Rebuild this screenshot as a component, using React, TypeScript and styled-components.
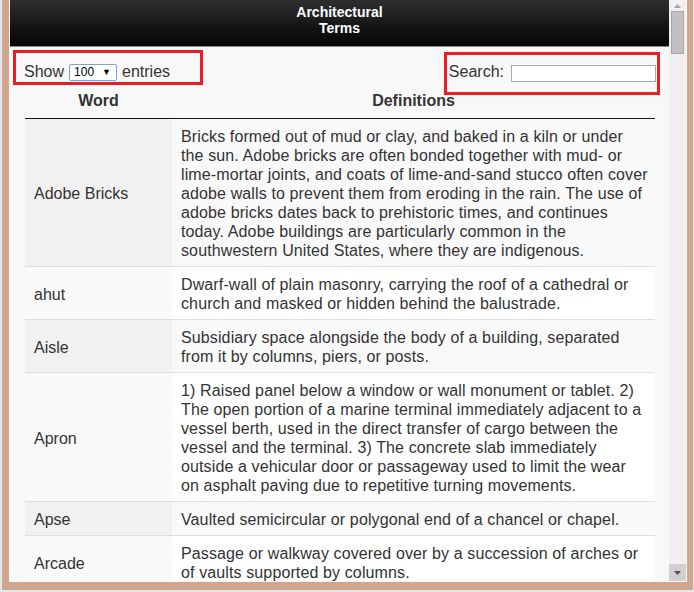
import styled, { createGlobalStyle } from 'styled-components'

const GlobalStyle = createGlobalStyle`
  html, body {
    margin: 0;
    padding: 0;
    background: #e4e7eb;
    overflow: hidden;
  }
  body {
    font-family: 'Liberation Sans', Arial, sans-serif;
    color: #333;
  }
`

type TTerm = {
  word: string
  lines: string[]
}

// lines are kept as the reference wraps them
const terms: TTerm[] = [
  {
    word: 'Adobe Bricks',
    lines: [
      'Bricks formed out of mud or clay, and baked in a kiln or under',
      'the sun. Adobe bricks are often bonded together with mud- or',
      'lime-mortar joints, and coats of lime-and-sand stucco often cover',
      'adobe walls to prevent them from eroding in the rain. The use of',
      'adobe bricks dates back to prehistoric times, and continues',
      'today. Adobe buildings are particularly common in the',
      'southwestern United States, where they are indigenous.',
    ],
  },
  {
    word: 'ahut',
    lines: [
      'Dwarf-wall of plain masonry, carrying the roof of a cathedral or',
      'church and masked or hidden behind the balustrade.',
    ],
  },
  {
    word: 'Aisle',
    lines: [
      'Subsidiary space alongside the body of a building, separated',
      'from it by columns, piers, or posts.',
    ],
  },
  {
    word: 'Apron',
    lines: [
      '1) Raised panel below a window or wall monument or tablet. 2)',
      'The open portion of a marine terminal immediately adjacent to a',
      'vessel berth, used in the direct transfer of cargo between the',
      'vessel and the terminal. 3) The concrete slab immediately',
      'outside a vehicular door or passageway used to limit the wear',
      'on asphalt paving due to repetitive turning movements.',
    ],
  },
  {
    word: 'Apse',
    lines: ['Vaulted semicircular or polygonal end of a chancel or chapel.'],
  },
  {
    word: 'Arcade',
    lines: [
      'Passage or walkway covered over by a succession of arches or',
      'of vaults supported by columns.',
    ],
  },
]

export default function App() {
  return (
    <>
      <GlobalStyle />
      <Page>
        <Frame>
          <Window>
            <Main>
              <Header>
                Architectural
                <br />
                Terms
              </Header>
              <Content>
                <Controls>
                  <LengthControl $box={{ top: -13, left: -11, width: 190, height: 35 }}>
                    Show
                    <FakeSelect>
                      <span>100</span>
                      <span className='arrow'>▼</span>
                    </FakeSelect>
                    entries
                  </LengthControl>
                  <FilterControl $box={{ top: -11, left: -5, width: 216, height: 43 }}>
                    Search:
                    <SearchInput type='search' aria-label='Search' />
                  </FilterControl>
                </Controls>
                <Table>
                  <colgroup>
                    <col style={{ width: 147 }} />
                    <col />
                  </colgroup>
                  <thead>
                    <tr>
                      <Th>Word</Th>
                      <Th>Definitions</Th>
                    </tr>
                  </thead>
                  <tbody>
                    {terms.map((t, i) => (
                      <Row key={t.word} $odd={i % 2 === 0}>
                        <WordCell>{t.word}</WordCell>
                        <DefCell>
                          {t.lines.map((line, j) => (
                            <span key={j}>
                              {j > 0 && <br />}
                              {line}
                            </span>
                          ))}
                        </DefCell>
                      </Row>
                    ))}
                  </tbody>
                </Table>
              </Content>
            </Main>
            <Scrollbar>
              <ArrowButton>
                <svg width='7' height='4' viewBox='0 0 7 4'>
                  <path d='M0 4 L3.5 0 L7 4 Z' fill='#a3a3a3' />
                </svg>
              </ArrowButton>
              <Thumb />
              <Track />
              <ArrowButton $active>
                <svg width='7' height='4' viewBox='0 0 7 4'>
                  <path d='M0 0 L7 0 L3.5 4 Z' fill='#505050' />
                </svg>
              </ArrowButton>
            </Scrollbar>
          </Window>
        </Frame>
      </Page>
    </>
  )
}

type TBox = {
  top: number
  left: number
  width: number
  height: number
}

const Page = styled.div`
  padding-left: 2px;
`

const Frame = styled.div`
  width: 691px;
  height: 590px;
  box-sizing: border-box;
  padding: 0 6px 8px 7px;
  background: #cfa690;
`

const Window = styled.div`
  height: 100%;
  box-sizing: border-box;
  display: flex;
  border: 1px solid #f6f6f6;
  border-top: 0;
  background: #f8f8f8;
`

const Main = styled.div`
  flex: 1;
  min-width: 0;
  overflow: hidden;
  display: flex;
  flex-direction: column;
  background: #f8f8f8;
`

const Header = styled.div`
  height: 47px;
  flex-shrink: 0;
  box-sizing: border-box;
  padding-top: 4px;
  text-align: center;
  color: #fff;
  font-weight: bold;
  font-size: 14px;
  line-height: 16px;
  background: linear-gradient(#2f2f2f, #141414 60%, #050505);
  border-bottom: 1px solid #8a8a8a;
`

const Content = styled.div`
  padding: 0 13px 0 15px;
`

const Controls = styled.div`
  height: 42px;
  box-sizing: border-box;
  padding: 16px 0 0 0;
  display: flex;
  justify-content: space-between;
  align-items: flex-start;
  font-size: 16px;
  line-height: 18px;
`

// the red outline is a highlight drawn over each control
const Highlighted = styled.div<{ $box: TBox }>`
  position: relative;
  display: flex;
  align-items: center;

  &::after {
    content: '';
    position: absolute;
    top: ${p => p.$box.top}px;
    left: ${p => p.$box.left}px;
    width: ${p => p.$box.width}px;
    height: ${p => p.$box.height}px;
    box-sizing: border-box;
    border: 3px solid #ed1c24;
    pointer-events: none;
  }
`

const LengthControl = styled(Highlighted)`
  margin-left: -1px;
  height: 18px;
`

const FilterControl = styled(Highlighted)`
  height: 18px;
`

const FakeSelect = styled.span`
  display: inline-flex;
  align-items: center;
  justify-content: space-between;
  box-sizing: border-box;
  width: 48px;
  height: 17px;
  margin: 0 5px;
  padding: 0 5px 0 4px;
  background: #fff;
  border: 1px solid #7fa2d6;
  border-radius: 2px;
  font-size: 12px;
  line-height: 15px;
  color: #000;

  .arrow {
    font-size: 9px;
  }
`

const SearchInput = styled.input`
  width: 145px;
  height: 17px;
  box-sizing: border-box;
  margin: 3px 0 0 7px;
  padding: 0 2px;
  border: 1px solid #a9a9a9;
  background: #fff;
  outline: none;
`

const Table = styled.table`
  width: 630px;
  border-collapse: collapse;
  table-layout: fixed;
  font-size: 16px;
  line-height: 19px;
`

const Th = styled.th`
  padding: 2px 18px 8px;
  font-weight: bold;
  text-align: center;
  border-bottom: 1px solid #111;
`

const Row = styled.tr<{ $odd: boolean }>`
  border-top: 1px solid #ddd;

  &:first-child {
    border-top: 0;
  }

  td {
    background: ${p => (p.$odd ? '#f9f9f9' : '#ffffff')};
  }

  td:first-child {
    background: ${p => (p.$odd ? '#f1f1f1' : '#fafafa')};
  }
`

const WordCell = styled.td`
  padding: 8px 9px 6px;
  vertical-align: middle;
`

const DefCell = styled.td`
  padding: 8px 9px 6px;
  vertical-align: middle;
  white-space: nowrap;
  letter-spacing: 0.12px;
`

const Scrollbar = styled.div`
  width: 17px;
  flex-shrink: 0;
  display: flex;
  flex-direction: column;
  background: #f0f0f0;
`

const ArrowButton = styled.div<{ $active?: boolean }>`
  height: 11px;
  flex-shrink: 0;
  display: flex;
  align-items: center;
  justify-content: center;
  background: ${p => (p.$active ? '#d0d0d0' : 'transparent')};
  ${p => p.$active && 'height: 17px;'}
`

const Thumb = styled.div`
  height: 43px;
  margin: 0 2px;
  flex-shrink: 0;
  box-sizing: border-box;
  background: #c1c1c1;
  border: 1px solid #a8a8a8;
`

const Track = styled.div`
  flex: 1;
`
